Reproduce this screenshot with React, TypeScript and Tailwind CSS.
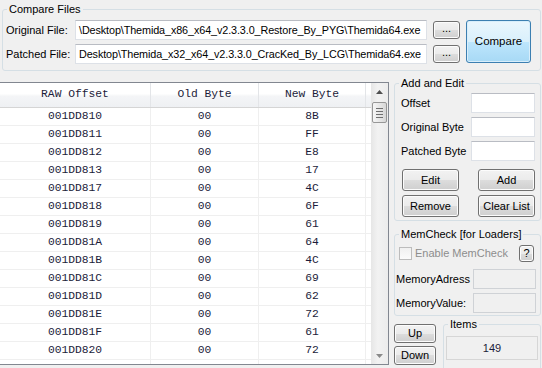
import React from 'react'

const btn =
  'flex items-center justify-center rounded-[3px] border border-[#707070] bg-[linear-gradient(to_bottom,#f2f2f2_0%,#ebebeb_50%,#dddddd_50%,#cfcfcf_100%)] shadow-[inset_0_0_0_1px_#fcfcfc] text-black'

const box =
  'border border-[#dde1e7] border-t-[#b9bcc3] bg-white'

const group = 'border border-[#d5dfe5] rounded-[3px]'

const rows: [string, string, string][] = [
  ['001DD810', '00', '8B'],
  ['001DD811', '00', 'FF'],
  ['001DD812', '00', 'E8'],
  ['001DD813', '00', '17'],
  ['001DD817', '00', '4C'],
  ['001DD818', '00', '6F'],
  ['001DD819', '00', '61'],
  ['001DD81A', '00', '64'],
  ['001DD81B', '00', '4C'],
  ['001DD81C', '00', '69'],
  ['001DD81D', '00', '62'],
  ['001DD81E', '00', '72'],
  ['001DD81F', '00', '61'],
  ['001DD820', '00', '72'],
  ['', '', ''],
]

function Arrow({ up }: { up?: boolean }) {
  return (
    <svg width="7" height="4" viewBox="0 0 7 4">
      {up ? (
        <path d="M0 4 L3.5 0 L7 4 Z" fill="#4f4f4f" />
      ) : (
        <path d="M0 0 L3.5 4 L7 0 Z" fill="#8a8a8a" />
      )}
    </svg>
  )
}

function FileTable() {
  return (
    <div className="mt-[5px] flex h-[283px] w-[389px] shrink-0 overflow-hidden border-b border-r border-t border-[#828790] bg-white font-['Liberation_Mono','Courier_New',monospace] text-[11.3px] text-[#1c1c3a]">
      <div className="w-[371px]">
        {/* header */}
        <div className="flex h-[25px] border-b border-[#d5d5d5] bg-[linear-gradient(to_bottom,#ffffff_0%,#ffffff_45%,#f4f5f7_55%,#eef0f3_100%)]">
          <div className="flex w-[151px] items-center justify-center border-r border-[#e3e5e8]">RAW Offset</div>
          <div className="flex w-[108px] items-center justify-center border-r border-[#e3e5e8]">Old Byte</div>
          <div className="flex w-[107px] items-center justify-center border-r border-[#e3e5e8]">New Byte</div>
          <div className="w-[5px]" />
        </div>
        {rows.map(([a, b, c], i) => (
          <div key={i} className="flex h-[18px] border-b border-[#efefef]">
            <div className="flex w-[151px] items-center justify-center border-r border-[#efefef]">{a}</div>
            <div className="flex w-[108px] items-center justify-center border-r border-[#efefef]">{b}</div>
            <div className="flex w-[107px] items-center justify-center border-r border-[#efefef]">{c}</div>
            <div className="w-[5px]" />
          </div>
        ))}
      </div>
      {/* scrollbar */}
      <div className="flex w-[17px] flex-col bg-[linear-gradient(to_right,#e6e6e6,#f2f2f2_40%,#ececec)]">
        <div className="flex h-[17px] items-center justify-center">
          <Arrow up />
        </div>
        <div className="mx-[1px] mt-[2px] flex h-[21px] flex-col items-center justify-center gap-[2px] rounded-[2px] border border-[#979797] bg-[linear-gradient(to_right,#f6f6f6,#e4e4e4_60%,#d6d6d6)]">
          <div className="h-[1px] w-[7px] bg-[#6f6f6f]" />
          <div className="h-[1px] w-[7px] bg-[#6f6f6f]" />
          <div className="h-[1px] w-[7px] bg-[#6f6f6f]" />
          <div className="h-[1px] w-[7px] bg-[#6f6f6f]" />
        </div>
        <div className="flex-1" />
        <div className="flex h-[17px] items-center justify-center">
          <Arrow />
        </div>
      </div>
    </div>
  )
}

function RightPanel() {
  return (
    <div className="ml-[5px] w-[147px] shrink-0">
      <fieldset className={`${group} pb-[3px]`}>
        <legend className="ml-[4px] px-[2px] leading-[13px]">Add and Edit</legend>
        <div className="flex flex-col gap-[4px] pt-[3px]">
          {['Offset', 'Original Byte', 'Patched Byte'].map((l) => (
            <div key={l} className="flex items-center justify-between pl-[6px] pr-[5px]">
              <span>{l}</span>
              <div className={`${box} h-[20px] w-[64px]`} />
            </div>
          ))}
        </div>
        <div className="mt-[8px] grid grid-cols-2 gap-y-[4px] pl-[7px] pr-[5px]">
          <button className={`${btn} h-[22px] w-[57px]`}>Edit</button>
          <button className={`${btn} h-[22px] w-[57px] justify-self-end`}>Add</button>
          <button className={`${btn} h-[22px] w-[57px]`}>Remove</button>
          <button className={`${btn} h-[22px] w-[57px] justify-self-end`}>Clear List</button>
        </div>
      </fieldset>

      <fieldset className={`${group} mt-[7px] pb-[2px]`}>
        <legend className="ml-[4px] px-[2px] leading-[13px]">MemCheck [for Loaders]</legend>
        <div className="mt-[4px] flex h-[17px] items-center pl-[4px] pr-[6px]">
          <div className="h-[13px] w-[13px] border border-[#bcbcbc] bg-[linear-gradient(to_bottom,#f0f0f0,#fbfbfb)]" />
          <span className="ml-[3px] text-[#8d8d8d]">Enable MemCheck</span>
          <button className={`${btn} ml-auto h-[17px] w-[15px]`}>?</button>
        </div>
        <div className="mt-[7px] flex items-center justify-between pl-[1px] pr-[4px]">
          <span>MemoryAdress</span>
          <div className="h-[20px] w-[63px] border border-[#cfd2d6] bg-[#f0f0f0]" />
        </div>
        <div className="mt-[4px] flex items-center justify-between pl-[1px] pr-[4px]">
          <span>MemoryValue:</span>
          <div className="h-[20px] w-[63px] border border-[#cfd2d6] bg-[#f0f0f0]" />
        </div>
      </fieldset>

      <div className="mt-[2px] flex">
        <div className="flex flex-col gap-[3px] pt-[6px]">
          <button className={`${btn} h-[19px] w-[42px]`}>Up</button>
          <button className={`${btn} h-[19px] w-[42px]`}>Down</button>
        </div>
        <fieldset className={`${group} ml-[7px] flex-1 pb-[10px]`}>
          <legend className="ml-[4px] px-[2px] leading-[13px]">Items</legend>
          <div className="px-[2px] pt-[5px]">
            <div className="flex h-[24px] items-center justify-center border border-[#d6d6d6] text-[#1c1c3a]">149</div>
          </div>
        </fieldset>
      </div>
    </div>
  )
}

export default function App() {
  return (
    <div className="h-[368px] w-[542px] overflow-hidden bg-[#f0f0f0] font-['Liberation_Sans',Arial,sans-serif] text-[11px] leading-none text-black">
      <fieldset className={`${group} ml-[2px] mt-[3px] w-[539px] pb-[6px]`}>
        <legend className="ml-[4px] px-[2px] leading-[13px]">Compare Files</legend>
        <div className="flex items-start pl-[3px] pt-[4px]">
          <div className="flex flex-col gap-[4px]">
            <div className="flex items-center">
              <span className="w-[69px]">Original File:</span>
              <div className={`${box} flex h-[20px] w-[352px] items-center overflow-hidden whitespace-nowrap px-[3px] text-[10.8px] tracking-[-0.1px]`}>
                \Desktop\Themida_x86_x64_v2.3.3.0_Restore_By_PYG\Themida64.exe
              </div>
            </div>
            <div className="flex items-center">
              <span className="w-[69px]">Patched File:</span>
              <div className={`${box} flex h-[20px] w-[352px] items-center overflow-hidden whitespace-nowrap px-[3px] text-[10.8px] tracking-[-0.1px]`}>
                Desktop\Themida_x32_x64_v2.3.3.0_CracKed_By_LCG\Themida64.exe
              </div>
            </div>
          </div>
          <div className="ml-[6px] flex flex-col gap-[6px] pt-[1px]">
            <button className={`${btn} h-[18px] w-[27px] pb-[3px]`}>...</button>
            <button className={`${btn} h-[18px] w-[27px] pb-[3px]`}>...</button>
          </div>
          <button className="ml-[6px] flex h-[43px] w-[65px] items-center justify-center rounded-[3px] border border-[#3c7fb1] bg-[linear-gradient(to_bottom,#eaf6fd_0%,#d9f0fc_50%,#bee6fd_50%,#a7d9f5_100%)] text-[11.5px] shadow-[inset_0_0_0_1px_#d8eefb]">
            Compare
          </button>
        </div>
      </fieldset>

      <div className="mt-[6px] flex items-start">
        <FileTable />
        <RightPanel />
      </div>
    </div>
  )
}
